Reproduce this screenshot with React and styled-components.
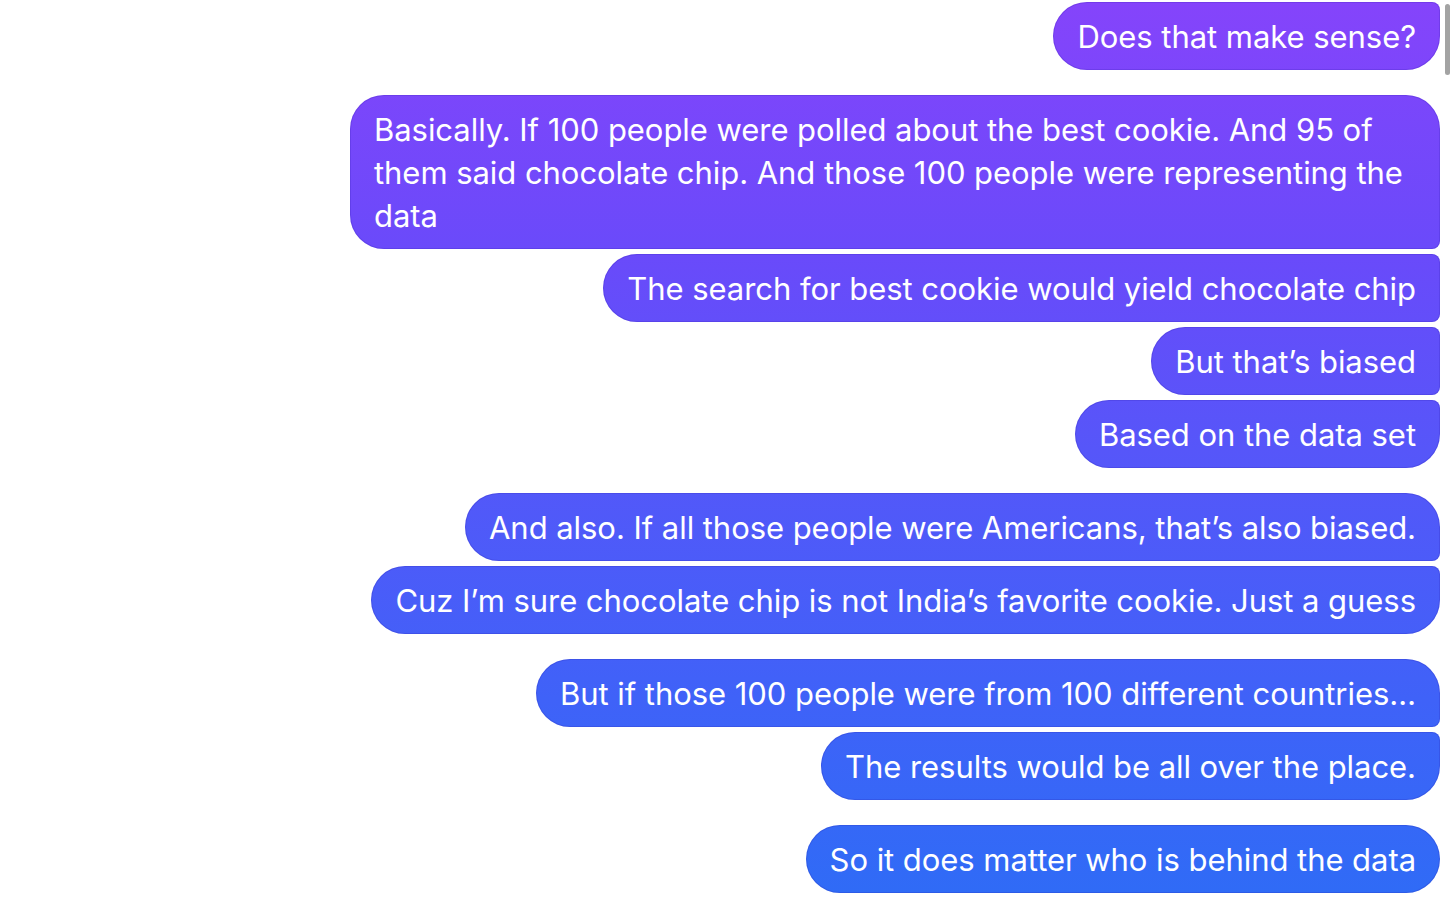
import React from "react";
import styled, { createGlobalStyle } from "styled-components";

const Global = createGlobalStyle`
  html, body { margin: 0; padding: 0; background: #ffffff; }
  body { font-family: Inter, "Noto Sans", "Liberation Sans", sans-serif; overflow: hidden; }
`;

const Page = styled.div`
  position: relative;
  width: 1456px;
  height: 914px;
  background: #ffffff;
  overflow: hidden;
`;

const Thread = styled.div`
  display: flex;
  flex-direction: column;
  align-items: flex-end;
  padding: 2px 16px 20px 0;
`;

const Group = styled.div`
  display: flex;
  flex-direction: column;
  align-items: flex-end;
  gap: 5px;
  & + & { margin-top: 25px; }
`;

const BIG = 34;
const SMALL = 8;

const Bubble = styled.div`
  box-sizing: border-box;
  max-width: 1090px;
  padding: 13px 24px 12px 24px;
  color: #ffffff;
  font-size: 31px;
  line-height: 43px;
  letter-spacing: -0.05px;
  background: linear-gradient(to bottom, #8544fb 0px, #6a4afa 250px, #5656f9 450px, #3f62f8 700px, #2e6cf6 914px) fixed;
  box-shadow: inset 0 0 0 1px rgba(40, 20, 160, 0.18);
  border-radius: ${BIG}px ${(p) => (p.$top ? BIG : SMALL)}px ${(p) => (p.$bottom ? BIG : SMALL)}px ${BIG}px;
`;

const Scrollbar = styled.div`
  position: absolute;
  top: 4px;
  right: 6px;
  width: 5px;
  height: 71px;
  border-radius: 3px;
  background: #a3a3a3;
`;

const groups = [
  { cont: true, items: ["Does that make sense?"] },
  {
    items: [
      "Basically. If 100 people were polled about the best cookie. And 95 of them said chocolate chip. And those 100 people were representing the data",
      "The search for best cookie would yield chocolate chip",
      "But that’s biased",
      "Based on the data set",
    ],
  },
  {
    items: [
      "And also. If all those people were Americans, that’s also biased.",
      "Cuz I’m sure chocolate chip is not India’s favorite cookie. Just a guess",
    ],
  },
  {
    items: [
      "But if those 100 people were from 100 different countries…",
      "The results would be all over the place.",
    ],
  },
  { items: ["So it does matter who is behind the data"] },
];

export default function App() {
  return (
    <Page>
      <Global />
      <Thread>
        {groups.map((g, gi) => (
          <Group key={gi}>
            {g.items.map((t, i) => (
              <Bubble
                key={i}
                $top={i === 0 && !g.cont}
                $bottom={i === g.items.length - 1}
              >
                {t}
              </Bubble>
            ))}
          </Group>
        ))}
      </Thread>
      <Scrollbar />
    </Page>
  );
}
